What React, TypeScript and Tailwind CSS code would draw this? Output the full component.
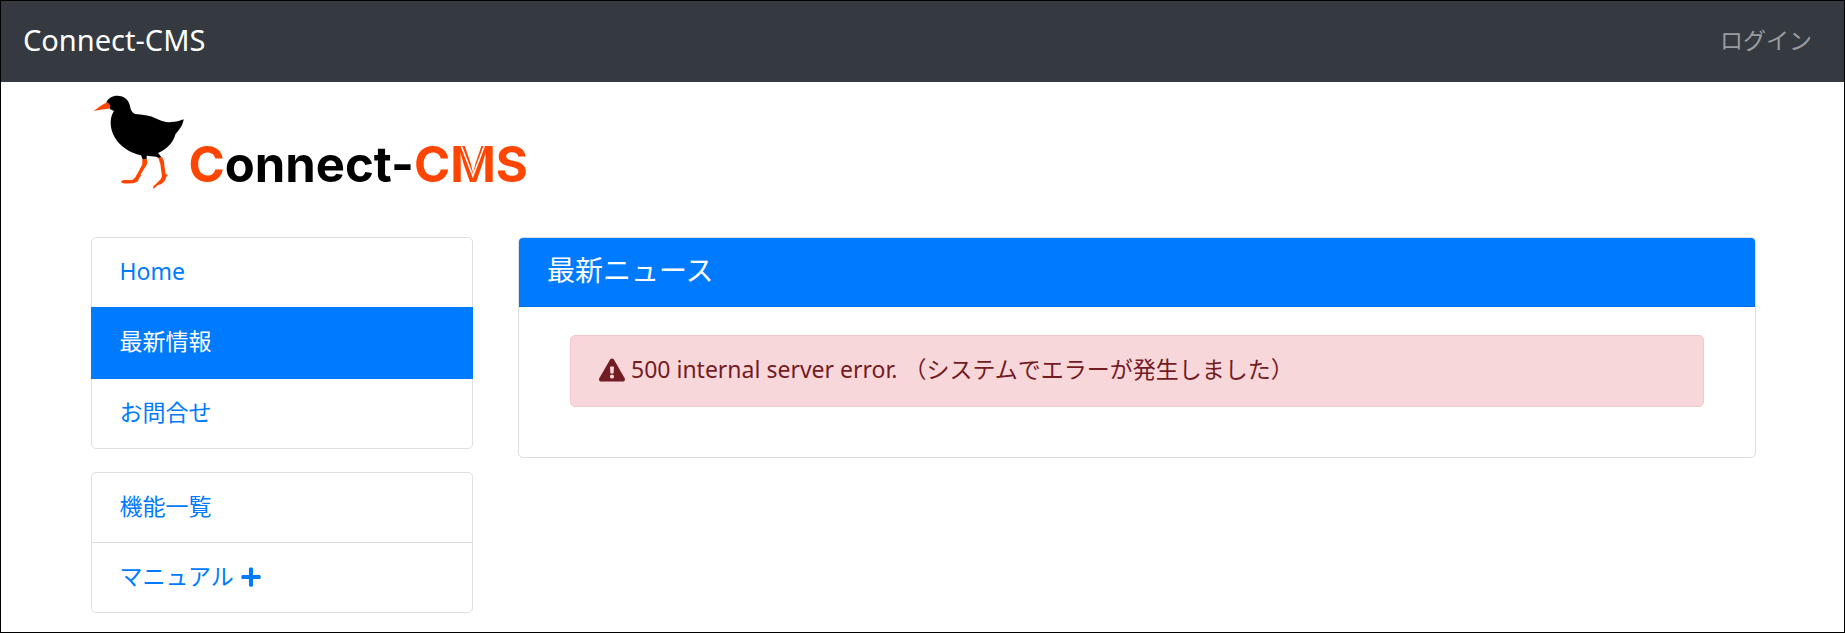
import type { ReactNode } from "react";
import { FaExclamationTriangle, FaPlus } from "react-icons/fa";

type MenuItem = { label: string; active?: boolean; expandable?: boolean };

const pageMenu: MenuItem[] = [
  { label: "Home" },
  { label: "最新情報", active: true },
  { label: "お問合せ" },
];

const guideMenu: MenuItem[] = [
  { label: "機能一覧" },
  { label: "マニュアル", expandable: true },
];

function Bird() {
  return (
    <svg viewBox="0 0 330 318" className="h-[106px] w-[110px] shrink-0" aria-hidden="true">
      <path
        fill="#000"
        d="M64 43C70 30 82 23 97 23C118 23 132 36 135 54C137 66 141 74 150 78C170 79 195 82 215 92C232 100 245 104 258 102C273 102 285 99 296 94C294 110 284 126 272 137C266 160 250 181 221 194L219 195L229 207L222 211L214 206L185 203L185 214L173 214L168 202C135 196 104 174 89 148C76 125 73 97 83 76L87 69L76 64Z"
      />
      <path fill="#ff4500" d="M26 69Q44 54 66 43Q76 48 76 56Q74 63 68 62Q45 64 26 69Z" />
      <path
        fill="#ff4500"
        d="M172 213H185Q189 222 186 229L166 261L170 262L165 267L157 281Q142 289 113 286L107 281L115 276H142L150 269Q164 246 172 229Z"
      />
      <path
        fill="#ff4500"
        d="M220 209L231 207Q238 216 238 232L242 258L249 262L244 266L241 275Q234 288 219 291L205 303Q203 294 212 289L227 274L231 265L226 229Z"
      />
    </svg>
  );
}

function Wordmark() {
  return (
    <span className="-ml-1.5 pt-[42px] font-[Inter] text-[49px] leading-[70px] font-bold text-black">
      <span className="text-[#ff4500]">C</span>onnect-
      <span className="text-[#ff4500]">
        C
        <span className="relative inline-block">
          M
          <svg viewBox="0 0 45 70" className="absolute inset-0 size-full" aria-hidden="true">
            <path d="M11 16L22.5 46L34 16" fill="none" stroke="#fff" strokeWidth="1.6" />
          </svg>
        </span>
        S
      </span>
    </span>
  );
}

function Menu({ items, label }: { items: MenuItem[]; label: string }) {
  return (
    <nav aria-label={label}>
      <ul className="rounded-[5px] border border-[#dfdfdf]">
        {items.map((item, i) => (
          <li key={item.label} className={i > 0 ? "border-t border-[#dfdfdf]" : ""}>
            <a
              href="#"
              aria-current={item.active ? "page" : undefined}
              className={
                item.active
                  ? "relative -mx-px -my-px flex items-center gap-1.5 bg-[#007bff] px-[29px] pt-[18px] pb-[21px] leading-[33px] text-white"
                  : "flex items-center gap-1.5 px-7 pt-[17px] pb-[19px] leading-[33px] text-[#007bff]"
              }
            >
              {item.label}
              {item.expandable && <FaPlus className="size-[22px]" />}
            </a>
          </li>
        ))}
      </ul>
    </nav>
  );
}

function Card({ title, children }: { title: string; children: ReactNode }) {
  return (
    <section className="self-start overflow-hidden rounded-[5px] border border-[#dfdfdf] lg:col-span-3">
      <h2 className="border-b border-[#006fe6] bg-[#007bff] px-7 pt-[15px] pb-[19px] text-[28px] leading-[34px] text-white">
        {title}
      </h2>
      <div className="px-[51px] pt-7 pb-[50px]">{children}</div>
    </section>
  );
}

export default function App() {
  return (
    <div className="min-h-screen border border-black bg-white font-['Noto_Sans','Noto_Sans_CJK_JP',sans-serif] text-[23px]">
      <header className="flex items-center justify-between bg-[#343a40] px-[22px] pt-[18px] pb-[21px] leading-[42px]">
        <a href="#" className="text-[29px] text-white">
          Connect-CMS
        </a>
        <a href="#" className="mr-[10px] text-[#9a9da0]">
          ログイン
        </a>
      </header>

      <div className="mx-auto max-w-[1710px] pr-[22px] pl-[23px]">
        <a href="#" className="-ml-1.5 flex pt-1.5">
          <Bird />
          <Wordmark />
        </a>

        <div className="grid gap-[45px] pt-[37px] pb-[17px] lg:grid-cols-4">
          <div className="flex flex-col gap-[23px]">
            <Menu items={pageMenu} label="ページ" />
            <Menu items={guideMenu} label="ガイド" />
          </div>
          <Card title="最新ニュース">
            <p
              role="alert"
              className="flex items-center gap-1.5 rounded-[5px] border border-[#f5c6cb] bg-[#f8d7da] px-7 pt-[17px] pb-[20px] leading-[33px] text-[#721c24]"
            >
              <FaExclamationTriangle className="size-[26px] shrink-0" />
              <span>500 internal server error. （システムでエラーが発生しました）</span>
            </p>
          </Card>
        </div>
      </div>
    </div>
  );
}
